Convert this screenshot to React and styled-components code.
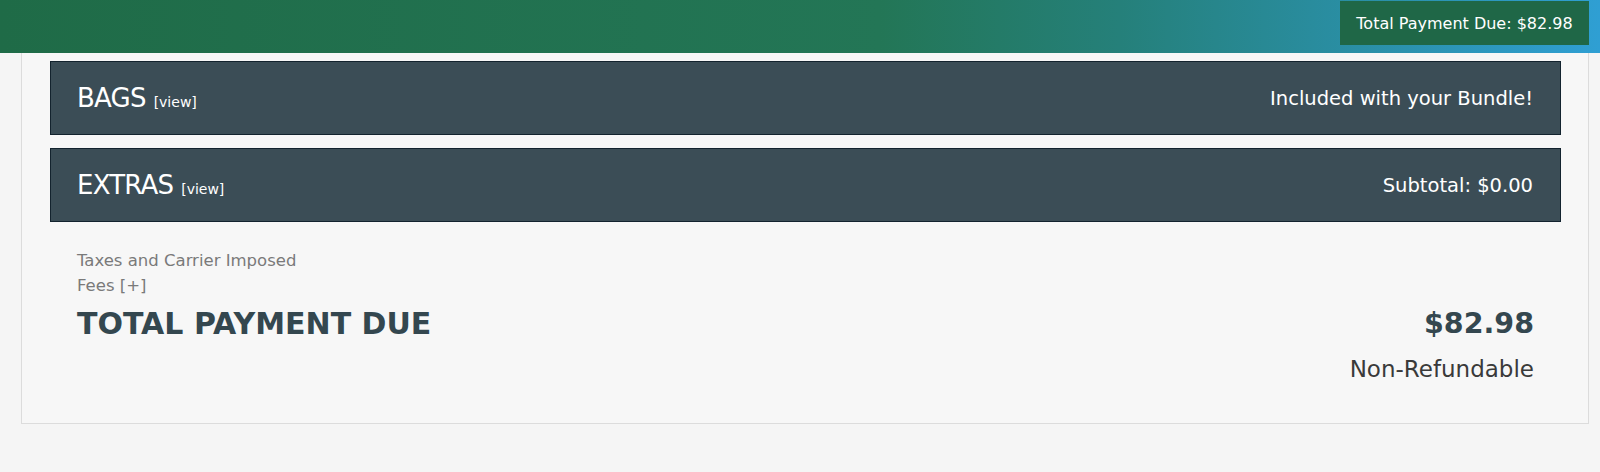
import React from 'react';
import styled, { createGlobalStyle } from 'styled-components';

const GlobalStyle = createGlobalStyle`
  body {
    margin: 0;
    background: #f5f5f5;
    font-family: "DejaVu Sans", Inter, sans-serif;
  }
`;

const Header = styled.header`
  height: 53px;
  display: flex;
  justify-content: flex-end;
  align-items: flex-start;
  padding-right: 11px;
  background: linear-gradient(to right, #1f6b47 0%, #237656 55%, #25807a 70%, #2a8fa6 85%, #2f9fd3 100%);
`;

const Badge = styled.div`
  margin-top: 1px;
  width: 249px;
  height: 44px;
  box-sizing: border-box;
  display: flex;
  align-items: center;
  justify-content: center;
  background: #1f6747;
  color: #fff;
  font-size: 16px;
  white-space: nowrap;
`;

const Page = styled.main`
  padding: 0 11px 0 21px;
  height: 419px;
  box-sizing: border-box;
`;

const Card = styled.section`
  height: 371px;
  box-sizing: border-box;
  border: 1px solid #dcdcdc;
  border-top: none;
  background: #f7f7f7;
  padding: 8px 27px 0 28px;
`;

const Bar = styled.div`
  height: 74px;
  box-sizing: border-box;
  margin-bottom: 13px;
  border: 1px solid #13232e;
  background: #3b4d56;
  color: #fff;
  display: flex;
  align-items: center;
  justify-content: space-between;
  padding: 0 27px 0 26px;
`;

const BarTitle = styled.div`
  display: flex;
  align-items: baseline;
  gap: 8px;
`;

const Label = styled.span`
  font-size: 26px;
  letter-spacing: -0.8px;
`;

const ViewLink = styled.a`
  font-size: 14px;
  color: #fff;
  cursor: pointer;
`;

const BarNote = styled.span`
  font-size: 19.5px;
`;

const Summary = styled.div`
  padding: 13px 27px 0 27px;
`;

const Fees = styled.div`
  color: #7a7a7a;
  font-size: 16.5px;
  line-height: 25px;
  width: 240px;
`;

const TotalRow = styled.div`
  display: flex;
  justify-content: space-between;
  align-items: flex-start;
  margin-top: 9px;
`;

const TotalLabel = styled.div`
  font-size: 30px;
  line-height: 34px;
  font-weight: 700;
  color: #34474f;
`;

const Amount = styled.div`
  display: flex;
  flex-direction: column;
  align-items: flex-end;
`;

const Price = styled.div`
  font-size: 28.5px;
  line-height: 34px;
  font-weight: 700;
  color: #34474f;
`;

const Refund = styled.div`
  margin-top: 14px;
  font-size: 23px;
  line-height: 28px;
  color: #3a3a3a;
`;

const sections = [
  { name: 'BAGS', note: 'Included with your Bundle!' },
  { name: 'EXTRAS', note: 'Subtotal: $0.00' },
];

export default function App() {
  return (
    <>
      <GlobalStyle />
      <Header>
        <Badge>Total Payment Due: $82.98</Badge>
      </Header>
      <Page>
        <Card>
          {sections.map((s) => (
            <Bar key={s.name}>
              <BarTitle>
                <Label>{s.name}</Label>
                <ViewLink>[view]</ViewLink>
              </BarTitle>
              <BarNote>{s.note}</BarNote>
            </Bar>
          ))}
          <Summary>
            <Fees>Taxes and Carrier Imposed Fees [+]</Fees>
            <TotalRow>
              <TotalLabel>TOTAL PAYMENT DUE</TotalLabel>
              <Amount>
                <Price>$82.98</Price>
                <Refund>Non-Refundable</Refund>
              </Amount>
            </TotalRow>
          </Summary>
        </Card>
      </Page>
    </>
  );
}
